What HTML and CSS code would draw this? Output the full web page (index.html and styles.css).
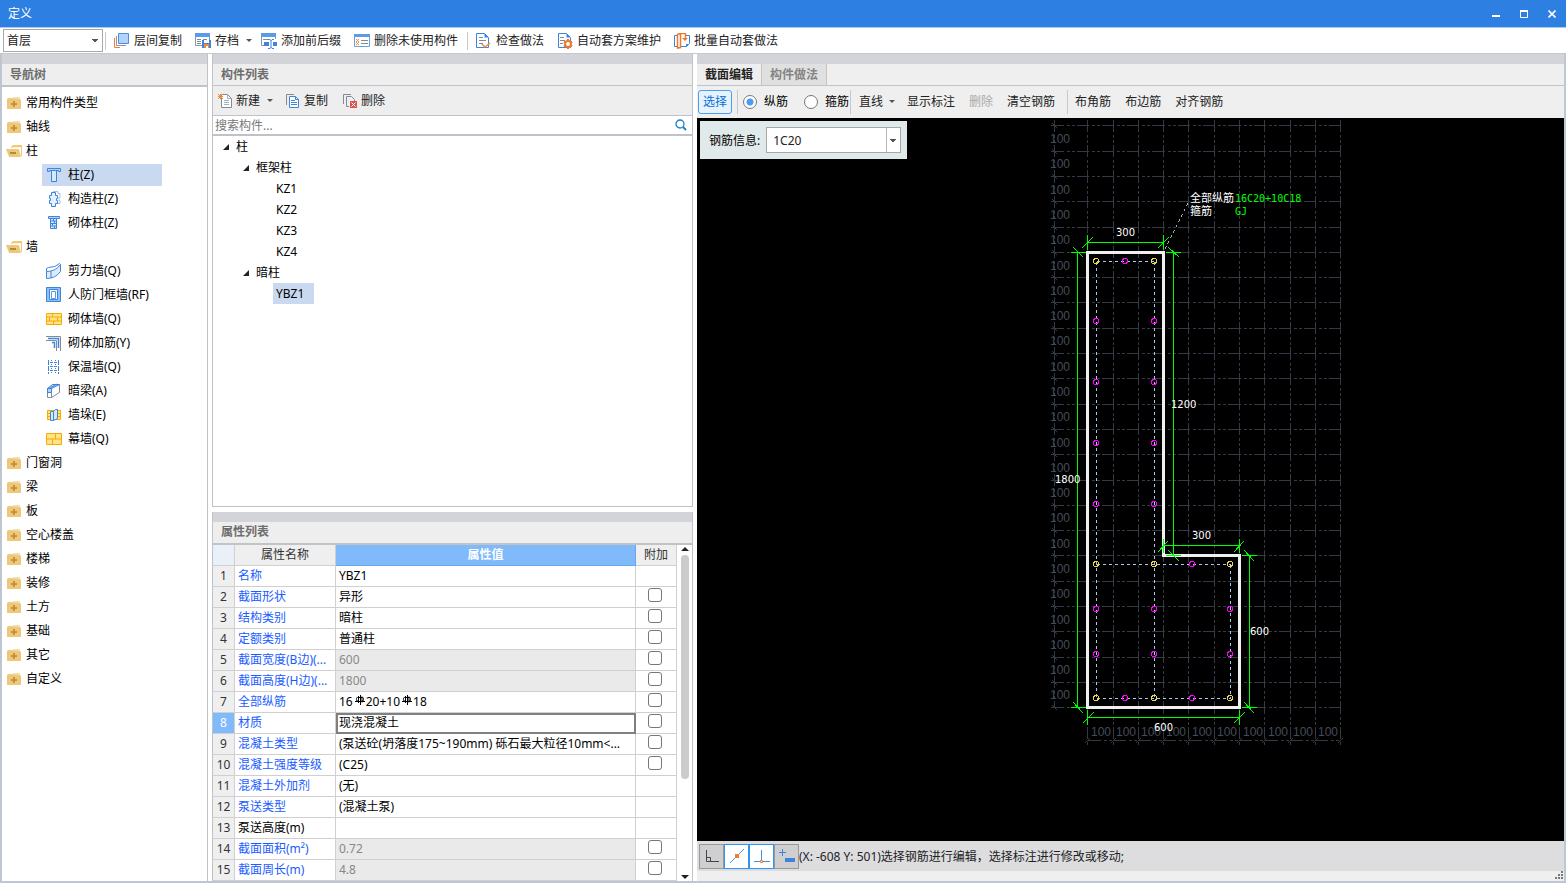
FILE: index.html
```
<!DOCTYPE html>
<html lang="zh-CN">
<head>
    <meta charset="UTF-8">
    <meta name="viewport" content="width=device-width, initial-scale=1.0">
    <title>定义</title>
    <link rel="stylesheet" href="styles.css">
</head>
<body>

    <!-- shared icons -->
    <svg class="defs" width="0" height="0" aria-hidden="true">
        <symbol id="folder" viewBox="0 0 16 16">
            <path d="M7 3l1-1h6v2H7z" fill="#f6dca6"/>
            <path d="M1 4l1-1h5l1 1h6l1 1v9H1z" fill="#ecc77c"/>
            <path d="M8 6v6M5 9h6" stroke="#c4933a" stroke-width="2"/>
        </symbol>
        <symbol id="folder-open" viewBox="0 0 16 16">
            <path d="M5 4l2-2h9v11h-1V5H5z" fill="#ecc77c"/>
            <path d="M6 4h9v1H6z" fill="#fff3d6"/>
            <path d="M0 6h13l2 8H3z" fill="#ecc77c"/>
            <path d="M4 10h6" stroke="#b98a35" stroke-width="2"/>
        </symbol>
        <symbol id="caret" viewBox="0 0 6 4">
            <path d="M0 0h6L3 3z" fill="#555"/>
        </symbol>
        <symbol id="expand" viewBox="0 0 8 8">
            <path d="M7 1v6H1z" fill="#222"/>
        </symbol>
        <symbol id="rebar" viewBox="0 0 10 10">
            <path d="M1.500 3.500q0-1 1-1h5q1 0 1 1v1q0 2-2 2h-3q-2 0-2-2zM3.500 1v7M5.500 0v10M7 1.500v6M0 6.500h10" fill="none" stroke="#000"/>
        </symbol>
    </svg>

    <header class="titlebar">
        <h1>定义</h1>
        <div class="window-buttons">
            <button aria-label="最小化"><svg width="8" height="8"><path d="M0 6h8" stroke="#fff" stroke-width="2"/></svg></button>
            <button aria-label="最大化"><svg width="8" height="8"><path d="M0 1h8" stroke="#fff" stroke-width="2"/><path d="M.5 1v6.500h7V1" fill="none" stroke="#fff"/></svg></button>
            <button aria-label="关闭"><svg width="8" height="8"><path d="M.5.5l7 7M7.500.5l-7 7" stroke="#fff" stroke-width="1.600"/></svg></button>
        </div>
    </header>

    <div class="toolbar">
        <select class="floor" aria-label="楼层">
            <option>首层</option>
        </select>
        <span class="separator"></span>
        <button class="tool">
            <svg width="16" height="16"><path d="M4.500.5h10v10h-10z" fill="#b3d3fb" stroke="#4a8fe0"/><path d="M2.500 3v9.500H12" fill="none" stroke="#8c98a8"/><path d="M.5 5v9.500H6" fill="none" stroke="#ef7d2b"/></svg>
            层间复制
        </button>
        <button class="tool">
            <svg width="16" height="16"><path d="M.5.5h14v12H.5z" fill="#fff" stroke="#8c98a8"/><path d="M0 0h15v4H0z" fill="#5b9bea"/><path d="M2 6.500h4M2 8.500h4M2 10.500h4M8 6.500h4" stroke="#7f8b99"/><path d="M7 7h9v8H7z" fill="#3d84da"/><path d="M9 7h5v3H9z" fill="#fff"/><path d="M9 11h5v4H9z" fill="#f58a34"/><path d="M11 13h2v2h-2z" fill="#fff"/></svg>
            存档
            <svg class="caret" width="6" height="4"><use href="#caret"/></svg>
        </button>
        <button class="tool">
            <svg width="16" height="16"><path d="M.5 3v9.500H3M14.500 3v3" fill="none" stroke="#8c98a8"/><path d="M0 0h15v4H0z" fill="#5b9bea"/><path d="M2 6.500h5" stroke="#7f8b99"/><path d="M3 9h5v4H3zM12 9h4v4h-4z" fill="#3d84da"/><path d="M7 6.500h2l1 1 1-1h2M10 7v8M7 15.500h2l1-1 1 1h2" fill="none" stroke="#3d84da"/></svg>
            添加前后缀
        </button>
        <button class="tool">
            <svg width="16" height="16"><path d="M.5 1.500h15v12H.5z" fill="#fff" stroke="#6f9fd8"/><path d="M0 1h16v3H0z" fill="#5b9bea"/><path d="M2 6l3 3M5 6l-3 3M2 9l3 3M5 9l-3 3" stroke="#f58a34"/><path d="M7 7.500h7M7 10.500h7" stroke="#7f8b99"/></svg>
            删除未使用构件
        </button>
        <span class="separator"></span>
        <button class="tool">
            <svg width="16" height="16"><path d="M.5.5h8l4 4v10H.5z" fill="#fff" stroke="#3d84da"/><path d="M8.500.5v4h4z" fill="#3d84da"/><path d="M3 4.500h4M3 7.500h7M3 10.500h4" stroke="#7f8b99"/><path d="M6 11l3 3 5-4" fill="none" stroke="#f58a34" stroke-width="1.500"/></svg>
            检查做法
        </button>
        <button class="tool">
            <svg width="16" height="16"><path d="M1.500.5h8l4 4v10h-12z" fill="#fff" stroke="#3d84da"/><path d="M9.500.5v4h4z" fill="#3d84da"/><path d="M3 4.500h4M3 7.500h5M3 10.500h3" stroke="#7f8b99"/><circle cx="11" cy="11" r="3" fill="#fff" stroke="#f0792a" stroke-width="2"/><path d="M11 6v2M11 14v2M7 8.500l1 1M14 12.500l1 1M7 13.500l1-1M14 9.500l1-1" stroke="#f0792a" stroke-width="2"/></svg>
            自动套方案维护
        </button>
        <button class="tool">
            <svg width="16" height="16"><path d="M3 2.500H.5v11H3M10 2.500h5.500v8l-3 3H7" fill="#fff" stroke="#3d84da"/><path d="M15 11h-3v3z" fill="#3d84da"/><path d="M3.500 1.500l3-1v14l-3 .5zM6.500.5h5v5" fill="#fff" stroke="#f0792a" stroke-width="1.500"/><path d="M8 5h6l-3 3z" fill="#f0792a"/></svg>
            批量自动套做法
        </button>
    </div>

    <main class="workspace">

        <section class="panel nav-panel">
            <h2>导航树</h2>
            <ul class="nav-tree">
                <li><svg width="16" height="16"><use href="#folder"/></svg>常用构件类型</li>
                <li><svg width="16" height="16"><use href="#folder"/></svg>轴线</li>
                <li><svg width="16" height="16"><use href="#folder-open"/></svg>柱</li>
                <li class="child selected"><span><svg width="16" height="16"><path d="M1.500 1.500h13v3h-2v-1h-9v1h-2z" fill="#b3d3fb" stroke="#3d84da"/><path d="M5.500 4v10.500h5V4" fill="#d7e8fd" stroke="#3d84da"/></svg>柱(Z)</span></li>
                <li class="child"><span><svg width="16" height="16"><path d="M7 .5h5v2h2v4h-1v3h1v3h-3" fill="none" stroke="#9cc2f0"/><path d="M5.500 1.500h4v3h2v3h-1v2h1v3h-2v3h-4v-3h-2v-3h1v-2h-1v-3h2z" fill="#e7f1fe" stroke="#3d84da"/></svg>构造柱(Z)</span></li>
                <li class="child"><span><svg width="16" height="16"><path d="M2.500 1.500h11v2h-11z" fill="#b3d3fb" stroke="#3d84da"/><path d="M4.500 3.500h6v10h-6z" fill="#d7e8fd" stroke="#3d84da"/><path d="M5 6h5M5 8.500h5M5 11h5M7.500 4v2M8.500 6v2M6.500 8.500v2M8.500 11v2" stroke="#3d84da"/></svg>砌体柱(Z)</span></li>
                <li><svg width="16" height="16"><use href="#folder-open"/></svg>墙</li>
                <li class="child"><span><svg width="16" height="16"><path d="M.5 8.500q9 0 14-7v7q-5 7-14 7z" fill="#dceafd" stroke="#3d84da"/><path d="M.5 8.500v-3l2-1q7 0 11-4l1 1M5 8v7" fill="none" stroke="#3d84da"/></svg>剪力墙(Q)</span></li>
                <li class="child"><span><svg width="16" height="16"><path d="M.5.5h14v14H.5z" fill="#8fc0fa" stroke="#3d84da"/><path d="M3.500 2.500h8v10h-8z" fill="#fff" stroke="#3d84da"/><path d="M5.500 4.500h4v7h-4z" fill="#fff" stroke="#5b9bea"/></svg>人防门框墙(RF)</span></li>
                <li class="child"><span><svg width="16" height="16"><path d="M.5 2.500h15v11H.5z" fill="#ffe28a" stroke="#f5ab00"/><path d="M0 6h16M0 10h16M6.500 2v4M3.500 6v4M11.500 6v4M7.500 10v4" stroke="#f5ab00"/></svg>砌体墙(Q)</span></li>
                <li class="child"><span><svg width="16" height="16"><path d="M0 1.500h14.500V16M0 5.500h10.500V16" fill="none" stroke="#7f8b99"/><path d="M2 3.500h10.500V13M6 7.500h2.500V13" fill="none" stroke="#3d84da" stroke-width="1.500"/></svg>砌体加筋(Y)</span></li>
                <li class="child"><span><svg width="16" height="16"><path d="M2.500 1v14M12.500 1v14" stroke="#3d84da" stroke-dasharray="5 1"/><path d="M5.500 1v14M9.500 1v14M4 3.500h7M4 7.500h7M4 11.500h7" stroke="#3d84da" stroke-dasharray="1 1"/></svg>保温墙(Q)</span></li>
                <li class="child"><span><svg width="16" height="16"><path d="M1.500 5.500v9h4v-9zM5.500 14.500l8-5v-8" fill="#fff" stroke="#7f8b99"/><path d="M1.500 5.500l5-4h7l-8 4zM1.500 5.500v4h4v-4M4 5l7-4" fill="#b3d3fb" stroke="#3d84da"/></svg>暗梁(A)</span></li>
                <li class="child"><span><svg width="16" height="16"><path d="M1.500 3.500h13v9h-13z" fill="#ffe28a" stroke="#f5ab00"/><path d="M1 6.500h14M1 9.500h14" stroke="#f5ab00"/><path d="M4.500 4.500h3v9h-3zM7.500 4.500l2-2h2v9l-4 2" fill="#d7e8fd" stroke="#3d84da"/></svg>墙垛(E)</span></li>
                <li class="child"><span><svg width="16" height="16"><path d="M.5 2.500h15v11H.5z" fill="#ffe28a" stroke="#f5ab00"/><path d="M0 8h16M9.500 2v6M6.500 8v6" stroke="#f5ab00"/></svg>幕墙(Q)</span></li>
                <li><svg width="16" height="16"><use href="#folder"/></svg>门窗洞</li>
                <li><svg width="16" height="16"><use href="#folder"/></svg>梁</li>
                <li><svg width="16" height="16"><use href="#folder"/></svg>板</li>
                <li><svg width="16" height="16"><use href="#folder"/></svg>空心楼盖</li>
                <li><svg width="16" height="16"><use href="#folder"/></svg>楼梯</li>
                <li><svg width="16" height="16"><use href="#folder"/></svg>装修</li>
                <li><svg width="16" height="16"><use href="#folder"/></svg>土方</li>
                <li><svg width="16" height="16"><use href="#folder"/></svg>基础</li>
                <li><svg width="16" height="16"><use href="#folder"/></svg>其它</li>
                <li><svg width="16" height="16"><use href="#folder"/></svg>自定义</li>
            </ul>
        </section>

        <div class="middle">
            <section class="panel list-panel">
                <h2>构件列表</h2>
                <div class="list-toolbar">
                    <button>
                        <svg width="14" height="14"><path d="M3.500.5h6l4 4v9h-10z" fill="#fff" stroke="#7f8b99"/><path d="M9.500.5v4h4M6 6.500h5M6 8.500h5M6 10.500h5" fill="none" stroke="#a6b0bc"/><path d="M0 0l5 5M5 0L0 5M2.500 0v5M0 2.500h5" stroke="#f58a34"/></svg>
                        新建
                        <svg class="caret" width="6" height="4"><use href="#caret"/></svg>
                    </button>
                    <button>
                        <svg width="14" height="14"><path d="M.5 11V.5H8" fill="none" stroke="#7f8b99"/><path d="M3.500 2.500h6l3 3v8h-9z" fill="#fff" stroke="#3d84da"/><path d="M9.500 2.500v3h3M5 6.500h4M5 8.500h6M5 10.500h6" fill="none" stroke="#3d84da"/></svg>
                        复制
                    </button>
                    <button>
                        <svg width="14" height="14"><path d="M.5 10V.5H8M6 12.500H3.500v-10h5l3 3V7" fill="none" stroke="#7f8b99"/><path d="M7 7h7v7H7z" fill="#d9534f"/><path d="M8.500 8.500l4 4M12.500 8.500l-4 4" stroke="#fff"/></svg>
                        删除
                    </button>
                </div>
                <label class="search">
                    <input type="text" placeholder="搜索构件..." aria-label="搜索构件">
                    <svg width="12" height="12"><circle cx="5" cy="5" r="4" fill="none" stroke="#1e7fc2" stroke-width="1.300"/><path d="M8 8l3 3" stroke="#1e7fc2" stroke-width="2"/></svg>
                </label>
                <ul class="component-tree">
                    <li class="level-1"><svg width="8" height="8"><use href="#expand"/></svg>柱</li>
                    <li class="level-2"><svg width="8" height="8"><use href="#expand"/></svg>框架柱</li>
                    <li class="level-3"><span>KZ1</span></li>
                    <li class="level-3"><span>KZ2</span></li>
                    <li class="level-3"><span>KZ3</span></li>
                    <li class="level-3"><span>KZ4</span></li>
                    <li class="level-2"><svg width="8" height="8"><use href="#expand"/></svg>暗柱</li>
                    <li class="level-3 selected"><span>YBZ1</span></li>
                </ul>
            </section>

            <section class="panel property-panel">
                <h2>属性列表</h2>
                <div class="property-body">
                    <div class="table-wrap">
                        <table>
                            <thead>
                                <tr><th class="num"></th><th class="name">属性名称</th><th class="value">属性值</th><th class="extra">附加</th></tr>
                            </thead>
                            <tbody>
                                <tr><th>1</th><td class="link">名称</td><td>YBZ1</td><td></td></tr>
                                <tr><th>2</th><td class="link">截面形状</td><td>异形</td><td><input type="checkbox" aria-label="附加 截面形状"></td></tr>
                                <tr><th>3</th><td class="link">结构类别</td><td>暗柱</td><td><input type="checkbox" aria-label="附加 结构类别"></td></tr>
                                <tr><th>4</th><td class="link">定额类别</td><td>普通柱</td><td><input type="checkbox" aria-label="附加 定额类别"></td></tr>
                                <tr><th>5</th><td class="link">截面宽度(B边)(...</td><td class="readonly">600</td><td><input type="checkbox" aria-label="附加 截面宽度"></td></tr>
                                <tr><th>6</th><td class="link">截面高度(H边)(...</td><td class="readonly">1800</td><td><input type="checkbox" aria-label="附加 截面高度"></td></tr>
                                <tr><th>7</th><td class="link">全部纵筋</td><td>16<svg class="rebar" width="10" height="10"><use href="#rebar"/></svg>20+10<svg class="rebar" width="10" height="10"><use href="#rebar"/></svg>18</td><td><input type="checkbox" aria-label="附加 全部纵筋"></td></tr>
                                <tr class="current"><th>8</th><td class="link">材质</td><td class="editing">现浇混凝土</td><td><input type="checkbox" aria-label="附加 材质"></td></tr>
                                <tr><th>9</th><td class="link">混凝土类型</td><td>(泵送砼(坍落度175~190mm) 砾石最大粒径10mm&lt;...</td><td><input type="checkbox" aria-label="附加 混凝土类型"></td></tr>
                                <tr><th>10</th><td class="link">混凝土强度等级</td><td>(C25)</td><td><input type="checkbox" aria-label="附加 混凝土强度等级"></td></tr>
                                <tr><th>11</th><td class="link">混凝土外加剂</td><td>(无)</td><td></td></tr>
                                <tr><th>12</th><td class="link">泵送类型</td><td>(混凝土泵)</td><td></td></tr>
                                <tr><th>13</th><td>泵送高度(m)</td><td></td><td></td></tr>
                                <tr><th>14</th><td class="link">截面面积(m²)</td><td class="readonly">0.72</td><td><input type="checkbox" aria-label="附加 截面面积"></td></tr>
                                <tr><th>15</th><td class="link">截面周长(m)</td><td class="readonly">4.8</td><td><input type="checkbox" aria-label="附加 截面周长"></td></tr>
                            </tbody>
                        </table>
                    </div>
                    <div class="scrollbar">
                        <svg width="8" height="4"><path d="M0 4h8L4 0z" fill="#222"/></svg>
                        <div class="track"><div class="thumb"></div></div>
                        <svg width="8" height="4"><path d="M0 0h8L4 4z" fill="#222"/></svg>
                    </div>
                </div>
            </section>
        </div>

        <section class="editor">
            <nav class="tabs">
                <button class="active">截面编辑</button>
                <button>构件做法</button>
            </nav>
            <div class="editor-toolbar">
                <button class="pick">选择</button>
                <span class="separator"></span>
                <label><input type="radio" name="bar" checked>纵筋</label>
                <label><input type="radio" name="bar">箍筋</label>
                <span class="separator tight"></span>
                <button>直线<svg class="caret" width="6" height="4"><use href="#caret"/></svg></button>
                <button>显示标注</button>
                <button disabled>删除</button>
                <button>清空钢筋</button>
                <span class="separator"></span>
                <button>布角筋</button>
                <button>布边筋</button>
                <button>对齐钢筋</button>
            </div>

            <div class="canvas">
                <svg class="drawing" viewBox="697 118 867 723">
                    <!-- axis grid, 100 mm per cell -->
                    <g class="grid">
                        <path d="M1087.500 118.500V745M1113.500 118.500V745M1138.500 118.500V745M1163.500 118.500V745M1188.500 118.500V745M1214.500 118.500V745M1239.500 118.500V745M1264.500 118.500V745M1290.500 118.500V745M1315.500 118.500V745M1340.500 118.500V745M1054.500 118.500V707"/>
                        <path d="M1050 125.500H1340M1050 151.500H1340M1050 176.500H1340M1050 201.500H1340M1050 227.500H1340M1050 252.500H1340M1050 277.500H1340M1050 302.500H1340M1050 328.500H1340M1050 353.500H1340M1050 378.500H1340M1050 404.500H1340M1050 429.500H1340M1050 454.500H1340M1050 480.500H1340M1050 505.500H1340M1050 530.500H1340M1050 555.500H1340M1050 581.500H1340M1050 606.500H1340M1050 631.500H1340M1050 657.500H1340M1050 682.500H1340M1050 707.500H1340M1087 740.500H1340"/>
                    </g>
                    <path class="ticks" d="M1052 123l5 5M1052 149l5 5M1052 174l5 5M1052 199l5 5M1052 225l5 5M1052 250l5 5M1052 275l5 5M1052 300l5 5M1052 326l5 5M1052 351l5 5M1052 376l5 5M1052 402l5 5M1052 427l5 5M1052 452l5 5M1052 478l5 5M1052 503l5 5M1052 528l5 5M1052 553l5 5M1052 579l5 5M1052 604l5 5M1052 629l5 5M1052 655l5 5M1052 680l5 5M1052 705l5 5M1085 743l5-5M1111 743l5-5M1136 743l5-5M1161 743l5-5M1186 743l5-5M1212 743l5-5M1237 743l5-5M1262 743l5-5M1288 743l5-5M1313 743l5-5M1338 743l5-5"/>
                    <g class="scale">
                        <text x="1050" y="143">100</text><text x="1050" y="168">100</text><text x="1050" y="194">100</text><text x="1050" y="219">100</text>
                        <text x="1050" y="244">100</text><text x="1050" y="270">100</text><text x="1050" y="295">100</text><text x="1050" y="320">100</text>
                        <text x="1050" y="345">100</text><text x="1050" y="371">100</text><text x="1050" y="396">100</text><text x="1050" y="421">100</text>
                        <text x="1050" y="447">100</text><text x="1050" y="472">100</text><text x="1050" y="497">100</text><text x="1050" y="522">100</text>
                        <text x="1050" y="548">100</text><text x="1050" y="573">100</text><text x="1050" y="598">100</text><text x="1050" y="624">100</text>
                        <text x="1050" y="649">100</text><text x="1050" y="674">100</text><text x="1050" y="699">100</text>
                        <text x="1091" y="736">100</text><text x="1116" y="736">100</text><text x="1141" y="736">100</text><text x="1166" y="736">100</text>
                        <text x="1192" y="736">100</text><text x="1217" y="736">100</text><text x="1243" y="736">100</text><text x="1268" y="736">100</text>
                        <text x="1293" y="736">100</text><text x="1318" y="736">100</text>
                    </g>

                    <!-- section outline and stirrups -->
                    <path class="outline" d="M1087.500 252.500H1163.500V555.500H1239.500V707.500H1087.500Z"/>
                    <path class="stirrup" d="M1096.500 261.500H1154.500M1096.500 261.500V698.500M1154.500 261.500V698.500M1096.500 564.500H1230.500M1230.500 564.500V698.500M1096.500 698.500H1230.500"/>

                    <g class="corner-bars">
                        <circle cx="1096" cy="261" r="2.500"/><circle cx="1154" cy="261" r="2.500"/>
                        <circle cx="1096" cy="564" r="2.500"/><circle cx="1154" cy="564" r="2.500"/><circle cx="1230" cy="564" r="2.500"/>
                        <circle cx="1096" cy="698" r="2.500"/><circle cx="1154" cy="698" r="2.500"/><circle cx="1230" cy="698" r="2.500"/>
                    </g>
                    <g class="side-bars">
                        <circle cx="1125" cy="261" r="2.500"/>
                        <circle cx="1096" cy="321" r="2.500"/><circle cx="1154" cy="321" r="2.500"/>
                        <circle cx="1096" cy="382" r="2.500"/><circle cx="1154" cy="382" r="2.500"/>
                        <circle cx="1096" cy="443" r="2.500"/><circle cx="1154" cy="443" r="2.500"/>
                        <circle cx="1096" cy="504" r="2.500"/><circle cx="1154" cy="504" r="2.500"/>
                        <circle cx="1192" cy="564" r="2.500"/>
                        <circle cx="1096" cy="609" r="2.500"/><circle cx="1154" cy="609" r="2.500"/><circle cx="1230" cy="609" r="2.500"/>
                        <circle cx="1096" cy="654" r="2.500"/><circle cx="1154" cy="654" r="2.500"/><circle cx="1230" cy="654" r="2.500"/>
                        <circle cx="1125" cy="698" r="2.500"/><circle cx="1192" cy="698" r="2.500"/>
                    </g>

                    <!-- dimensions -->
                    <g class="dimension">
                        <path d="M1087.500 242.500H1163.500M1087.500 235V250M1163.500 235V250M1082 248l11-11M1158 248l11-11"/>
                        <path d="M1077.500 252.500V707.500M1071 252.500H1086M1071 707.500H1086M1073 247l10 10M1073 702l10 11"/>
                        <path d="M1173.500 252.500V555.500M1166 252.500H1181M1166 555.500H1181M1168 247l11 10M1168 550l11 11"/>
                        <path d="M1163.500 545.500H1239.500M1163.500 539V553M1239.500 539V553M1158 552l10-11M1234 552l10-11"/>
                        <path d="M1249.500 555.500V707.500M1242 555.500H1257M1242 707.500H1257M1244 550l10 11M1244 702l10 11"/>
                        <path d="M1087.500 717.500H1239.500M1087.500 710V725M1239.500 710V725M1083 723l11-11M1234 723l11-11"/>
                    </g>
                    <g class="dimension-text">
                        <text x="1116" y="236">300</text>
                        <text x="1171" y="408">1200</text>
                        <text x="1055" y="483">1800</text>
                        <text x="1192" y="539">300</text>
                        <text x="1250" y="635">600</text>
                        <text x="1154" y="731">600</text>
                    </g>
                    <path class="leader" d="M1165 249L1188 203"/>
                    <g class="note">
                        <text x="1190" y="202">全部纵筋</text>
                        <text x="1190" y="215">箍筋</text>
                        <text class="note-value" x="1235" y="202">16C20+10C18</text>
                        <text class="note-value" x="1235" y="215">GJ</text>
                    </g>
                </svg>

                <div class="bar-info">
                    <label for="bar-spec">钢筋信息:</label>
                    <select id="bar-spec">
                        <option>1C20</option>
                    </select>
                </div>
            </div>

            <footer class="status">
                <button aria-label="正交"><svg width="16" height="16"><path d="M2.500 2v11.500H15M2.500 9.500h4v4" fill="none" stroke="#444"/></svg></button>
                <button class="on" aria-label="中点"><svg width="16" height="16"><path d="M1 15L15 1" stroke="#4a8fe0"/><path d="M6 6h4v4H6z" fill="#ef7d2b"/></svg></button>
                <button class="on" aria-label="垂点"><svg width="16" height="16"><path d="M7.500 2v11M0 13.500h16" stroke="#4a8fe0"/><path d="M6.500 12.500h2v2h-2z" fill="#fff" stroke="#ef7d2b"/></svg></button>
                <button aria-label="动态输入"><svg width="16" height="16"><path d="M3.500 1v7M0 4.500h7" stroke="#3d84da"/><path d="M6 10h10v4H6z" fill="#3d84da"/></svg></button>
                <output>(X: -608 Y: 501)选择钢筋进行编辑，选择标注进行修改或移动;</output>
            </footer>
            <div class="grip">
                <svg width="10" height="10"><path d="M7 1h2M4 4h2M7 4h2M1 7h2M4 7h2M7 7h2" stroke="#777" stroke-width="2"/></svg>
            </div>
        </section>
    </main>

</body>
</html>
```

FILE: styles.css
```
* {
    box-sizing: border-box;
}

body {
    margin: 0;
    height: 100vh;
    display: flex;
    flex-direction: column;
    overflow: hidden;
    background-color: #fff;
    color: #000;
    font-family: "Noto Sans", "Noto Sans CJK SC", sans-serif;
    font-size: 12px;
    line-height: 20px;
}

h1, h2, ul {
    margin: 0;
    padding: 0;
    font-size: 12px;
    list-style: none;
}

button, input, select {
    margin: 0;
    font-family: inherit;
    font-size: 12px;
    line-height: 20px;
    color: #222;
}

button {
    display: flex;
    align-items: center;
    padding: 0;
    border: none;
    background: none;
    white-space: nowrap;
}

svg {
    flex: none;
}

.defs {
    position: absolute;
}

.separator {
    width: 1px;
    background-color: #c8c9cc;
}

/* title bar */

.titlebar {
    display: flex;
    align-items: center;
    justify-content: space-between;
    height: 28px;
    flex: none;
    padding: 1px 10px 0 8px;
    background-color: #2d7fe2;
    border-bottom: 1px solid #a9c9ef;
    color: #fff;
}

.titlebar h1 {
    font-weight: normal;
}

.window-buttons {
    display: flex;
    gap: 20px;
}

/* main toolbar */

.toolbar {
    display: flex;
    align-items: center;
    height: 26px;
    flex: none;
    padding-left: 3px;
    border-bottom: 1px solid #c5c8cd;
}

.toolbar .separator {
    height: 18px;
    margin: 0 2px;
}

select {
    appearance: none;
    border: 1px solid #a9a9a9;
    border-radius: 0;
    background-color: #fff;
    background-repeat: no-repeat;
}

.floor {
    width: 100px;
    height: 23px;
    padding: 0 3px;
    background-image: conic-gradient(from -45deg at 50% 100%, #555 90deg, transparent 90deg);
    background-size: 6px 3px;
    background-position: right 4px center;
}

.tool {
    gap: 4px;
    padding: 0 6px;
    margin-right: 1px;
}

.tool .caret {
    margin: 0 -4px 0 3px;
}

/* panels */

.workspace {
    display: flex;
    gap: 4px;
    flex: 1;
    min-height: 0;
    border: solid #bfc6d2;
    border-width: 0 2px 2px;
}

.panel {
    display: flex;
    flex-direction: column;
    min-height: 0;
    border-right: 1px solid #bfc3c9;
}

.panel h2 {
    flex: none;
    height: 33px;
    padding: 0 8px;
    border-top: 10px solid #d3d4da;
    border-bottom: 2px solid #c0c4ca;
    background-color: #eee;
    color: #6d6d6d;
}

.nav-panel {
    width: 206px;
    flex: none;
}

.nav-panel h2 {
    padding-top: 1px;
}

.nav-tree {
    padding: 4px;
}

.nav-tree li {
    display: flex;
    align-items: center;
    gap: 4px;
    height: 24px;
}

.nav-tree .child {
    padding-left: 36px;
}

.nav-tree .child span {
    display: flex;
    align-items: center;
    gap: 6px;
    width: 120px;
    height: 22px;
    padding-left: 4px;
    white-space: nowrap;
}

.nav-tree .selected span,
.component-tree .selected span {
    background-color: #c9d9f0;
}

.middle {
    display: flex;
    flex-direction: column;
    gap: 5px;
    width: 481px;
    flex: none;
}

.middle .panel {
    border-left: 1px solid #bfc3c9;
}

.list-panel {
    flex: 11 1 0;
    border-bottom: 1px solid #bfc3c9;
}

.list-panel h2 {
    height: 32px;
    padding-top: 1px;
    border-bottom-width: 1px;
}

.list-toolbar {
    display: flex;
    align-items: center;
    gap: 15px;
    height: 30px;
    flex: none;
    padding: 0 5px;
    background-color: #eee;
    border-bottom: 1px solid #bfc3c9;
}

.list-toolbar button {
    gap: 4px;
}

.list-toolbar .caret {
    margin: 0 -2px 0 3px;
}

.search {
    display: flex;
    align-items: center;
    height: 20px;
    flex: none;
    padding-right: 5px;
    border-bottom: 2px solid #bfc3c9;
}

.search input {
    flex: 1;
    height: 18px;
    padding: 1px 2px 0;
    border: none;
    outline: none;
}

.search input::placeholder {
    color: #777;
}

.component-tree li {
    display: flex;
    align-items: center;
    gap: 6px;
    height: 21px;
}

.component-tree .level-1 {
    padding-left: 9px;
}

.component-tree .level-2 {
    padding-left: 29px;
}

.component-tree .level-3 {
    padding-left: 60px;
}

.component-tree span {
    padding: 1px 10px 0 3px;
}

/* property table */

.property-panel {
    flex: 9 1 0;
}

.property-body {
    display: flex;
    flex: 1;
    min-height: 0;
}

.table-wrap {
    flex: 1;
    overflow: hidden;
}

table {
    width: 100%;
    table-layout: fixed;
    border-collapse: separate;
    border-spacing: 0;
}

th, td {
    height: 21px;
    padding: 0 3px;
    border-right: 1px solid #d0d0d0;
    border-bottom: 1px solid #d0d0d0;
    font-weight: normal;
    text-align: left;
    white-space: nowrap;
    overflow: hidden;
}

th {
    padding: 0;
    background-color: #efefef;
    color: #333;
    text-align: center;
}

.num {
    width: 22px;
    background-color: #eaf0f8;
}

.name {
    width: 101px;
}

.value {
    background-color: #80bafb;
    border-color: #66a8f0;
    color: #fff;
    font-weight: bold;
}

.extra {
    width: 41px;
}

.link {
    color: #1a5cff;
}

.readonly {
    background-color: #eaeaea;
    color: #888;
}

.current th {
    background-color: #80bafb;
    color: #fff;
}

.editing {
    outline: 2px solid #808080;
    outline-offset: -2px;
}

.rebar {
    margin: 0 1px 0 2px;
    vertical-align: 1px;
}

td input {
    display: block;
    appearance: none;
    width: 14px;
    height: 14px;
    margin: 0 11px 4px 9px;
    border: 1px solid #777;
    border-radius: 3px;
    background-color: #fff;
}

.scrollbar {
    display: flex;
    flex-direction: column;
    align-items: center;
    gap: 4px;
    width: 15px;
    padding: 2px 0;
}

.track {
    flex: 1;
    width: 8px;
}

.thumb {
    height: 71%;
    border-radius: 4px;
    background-color: #cbcbcb;
}

/* section editor */

.editor {
    display: flex;
    flex-direction: column;
    flex: 1;
    min-width: 0;
    background-color: #efefef;
}

.tabs {
    display: flex;
    height: 32px;
    flex: none;
    border-top: 10px solid #d3d4da;
    border-bottom: 1px solid #c0c4ca;
}

.tabs button {
    padding: 0 8px;
    border-right: 1px solid #c5c5c5;
    background-color: #e0e0e0;
    color: #858585;
    font-weight: bold;
}

.tabs .active {
    background-color: #eee;
    color: #222;
}

.editor-toolbar {
    display: flex;
    align-items: center;
    height: 32px;
    flex: none;
    padding-left: 1px;
}

.editor-toolbar button {
    padding: 0 7px;
}

.editor-toolbar button:disabled {
    color: #aaa;
}

.editor-toolbar .pick {
    height: 24px;
    padding: 0 4px;
    border: 1px solid #4a9df0;
    border-radius: 3px;
    background-color: #e6f2fe;
    color: #0a6ed8;
}

.editor-toolbar .separator {
    height: 24px;
    margin: 0 0 0 5px;
}

.editor-toolbar .tight {
    margin: 0 1px;
}

.editor-toolbar label {
    display: flex;
    align-items: center;
    gap: 7px;
    padding: 0 5px;
}

.editor-toolbar label + label {
    padding: 0 0 0 11px;
}

.editor-toolbar input {
    appearance: none;
    width: 14px;
    height: 14px;
    border: 1px solid #777;
    border-radius: 50%;
    background-color: #fff;
}

.editor-toolbar input:checked {
    background-image: radial-gradient(#4a9bf5 3px, transparent 4px);
}

.editor-toolbar .caret {
    margin: 0 -2px 0 6px;
}

.canvas {
    position: relative;
    flex: 1;
    min-height: 0;
    background-color: #000;
}

.drawing {
    display: block;
    width: 100%;
    height: 100%;
    shape-rendering: crispEdges;
}

.grid, .ticks {
    fill: none;
    stroke: #333a46;
}

.grid {
    stroke-dasharray: 12.28 3 3 2 3 2;
    stroke-dashoffset: 24;
}

.scale {
    fill: #454c59;
    font-family: "Liberation Sans", sans-serif;
    font-size: 12px;
}

.outline {
    fill: none;
    stroke: #f0f0f0;
    stroke-width: 3;
}

.stirrup {
    fill: none;
    stroke: #a9c8f0;
    stroke-dasharray: 3 3;
}

.corner-bars {
    fill: none;
    stroke: #f5d83a;
}

.side-bars {
    fill: none;
    stroke: #f0f;
}

.dimension {
    fill: none;
    stroke: #0f0;
}

.dimension-text {
    fill: #fff;
    font-family: "DejaVu Sans", sans-serif;
    font-size: 10px;
}

.leader {
    stroke: #aaa;
    stroke-dasharray: 3 3;
}

.note {
    fill: #fff;
    font-size: 11px;
}

.note-value {
    fill: #0f0;
    font-family: "DejaVu Sans Mono", monospace;
    font-size: 10px;
}

/* floating input over the canvas */

.bar-info {
    position: absolute;
    top: 3px;
    left: 3px;
    display: flex;
    align-items: center;
    gap: 6px;
    height: 38px;
    padding: 0 6px 0 9px;
    background-color: #e1eaea;
}

.bar-info label {
    padding-top: 2px;
}

.bar-info select {
    width: 135px;
    height: 26px;
    padding: 2px 6px 0;
    border: 1px solid #a9a9a9;
    background-image: conic-gradient(from -45deg at 50% 100%, #555 90deg, transparent 90deg), linear-gradient(#b5b5b5, #b5b5b5);
    background-size: 6px 3px, 1px 100%;
    background-position: right 4px center, right 13px center;
}

.status {
    display: flex;
    align-items: center;
    height: 30px;
    flex: none;
    padding-left: 2px;
    background-color: #dddde0;
}

.status button {
    justify-content: center;
    width: 25px;
    height: 25px;
    border: 1px solid #999;
    background-color: #cfcfd2;
}

.status .on {
    border-color: #2e95f5;
    background-color: #fff;
}

.status output {
    padding-top: 1px;
    color: #222;
    white-space: nowrap;
}

.grip {
    display: flex;
    justify-content: flex-end;
    height: 10px;
    flex: none;
}
```
